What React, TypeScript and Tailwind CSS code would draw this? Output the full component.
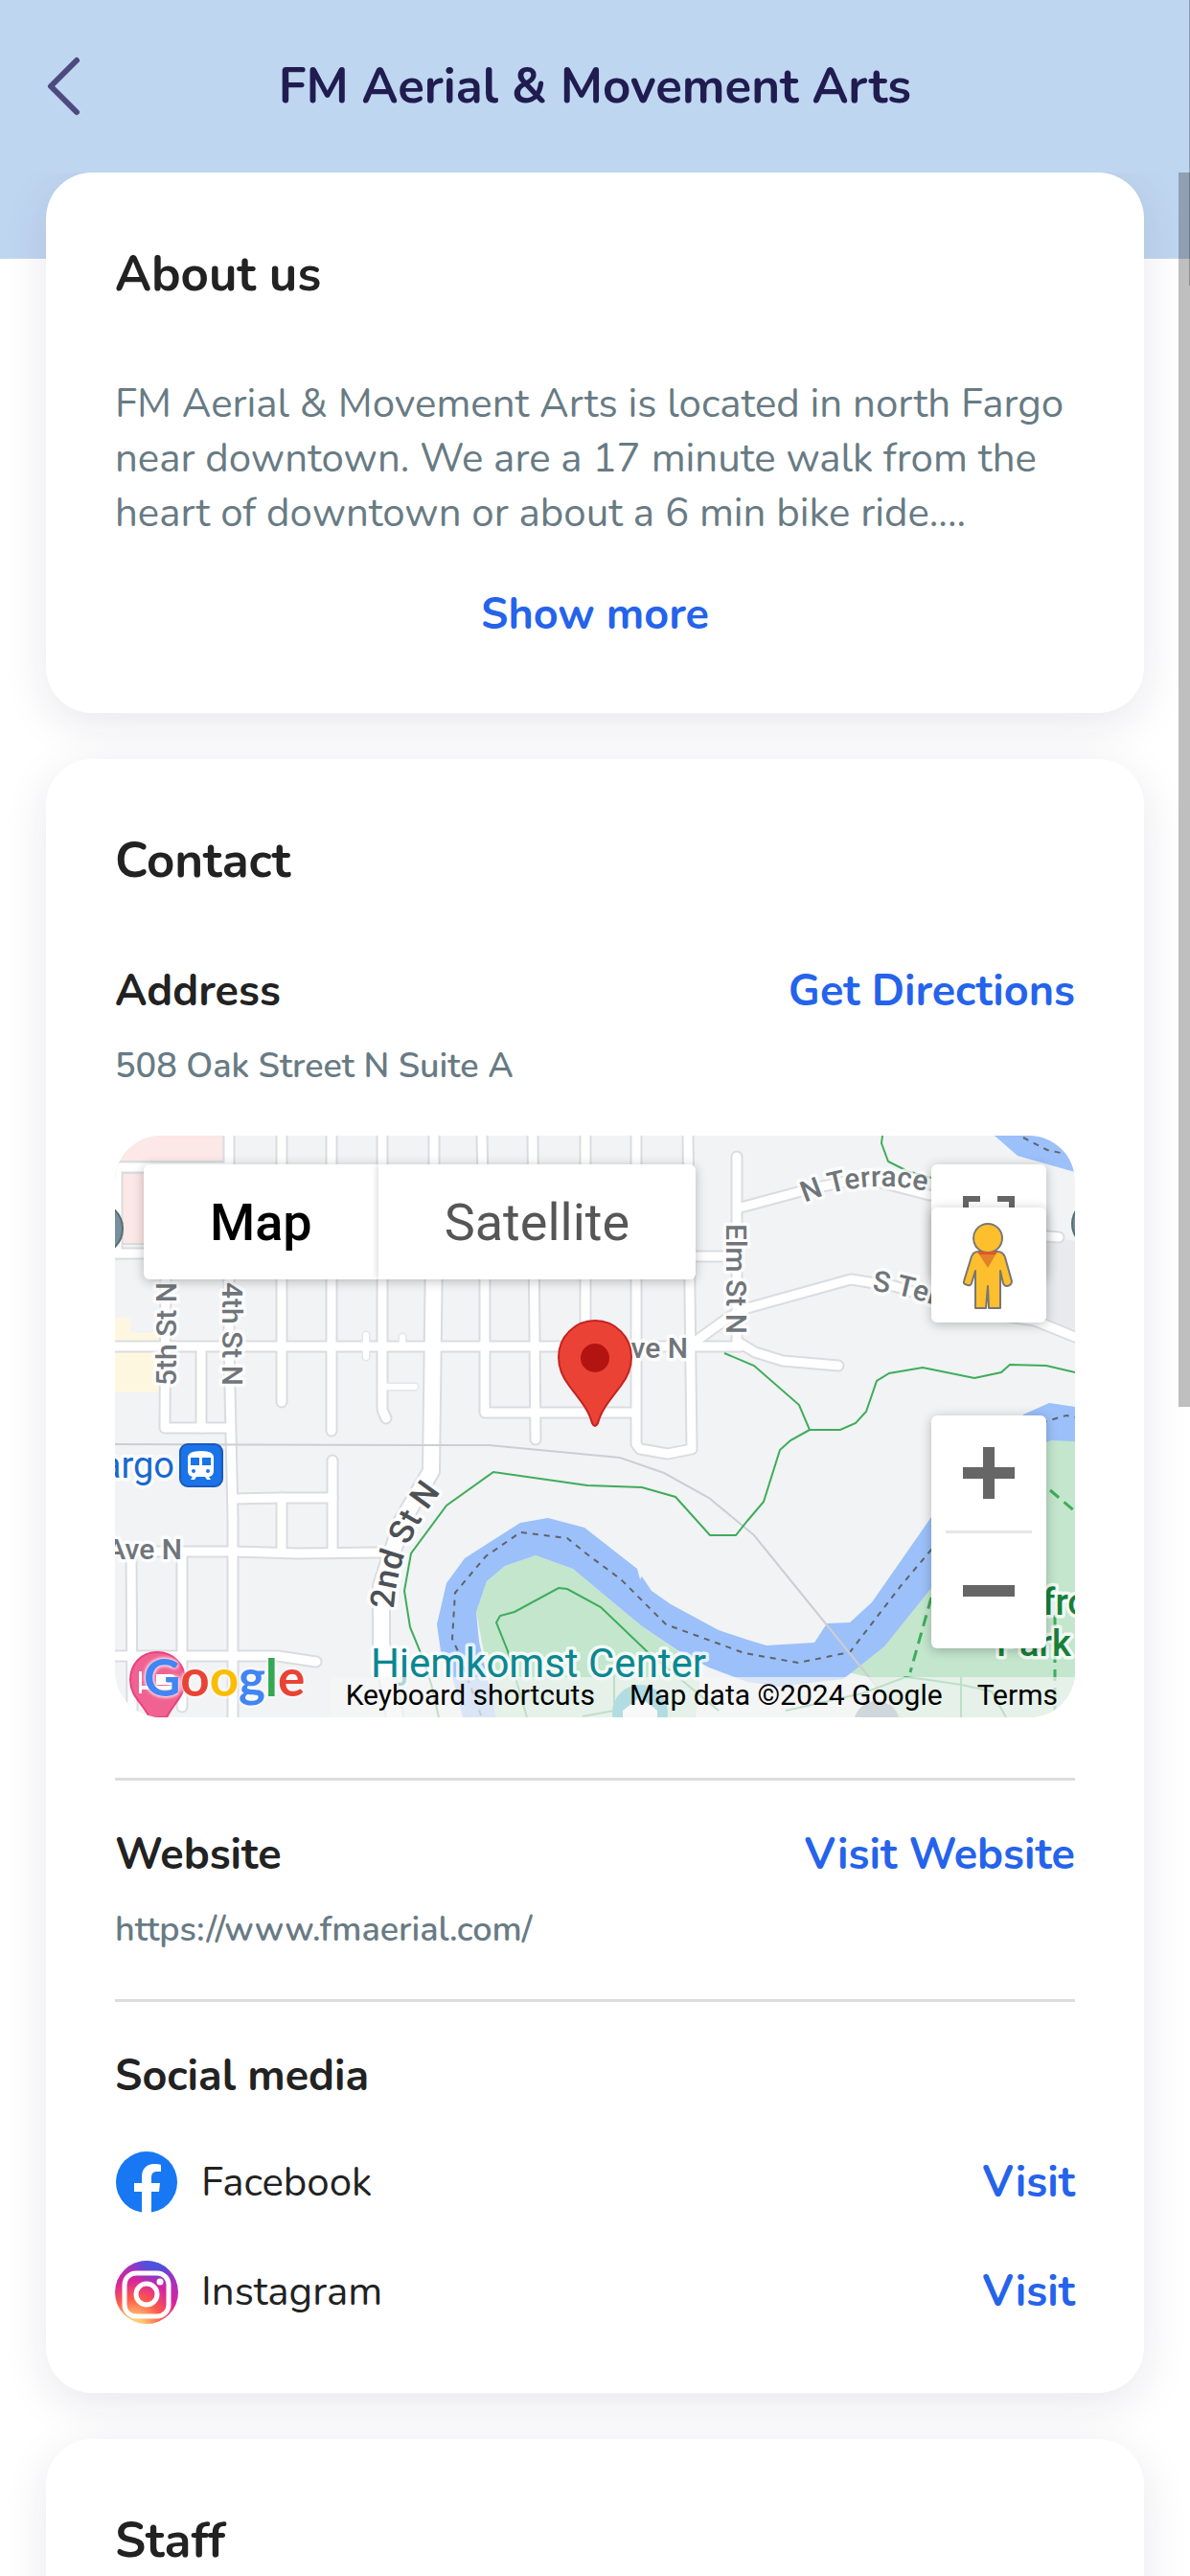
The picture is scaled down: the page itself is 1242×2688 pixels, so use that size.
import { useState } from 'react';
import type { ReactNode } from 'react';

const streets = [
  'M119 0V220L123 400V607',
  'M53 130L52 305H119',
  'M90 225V305',
  'M0 33H120',
  'M0 123H120',
  'M2 33V123',
  'M0 220H653',
  'M174 0V278',
  'M226 0V308',
  'M279 0V286L283 295',
  'M333 0V150',
  'M383 0L386 140V289H540',
  'M436 0L439 317',
  'M491 0V220',
  'M544 0V322L548 327L577 332L602 327L598 0',
  'M600 126H650',
  'M649 22V215',
  'M653 75L720 57L780 44L850 62',
  'M604 216L640 190L660 180L768 150L813 157L900 184L960 193L1002 210',
  'M930 102L985 106',
  'M650 215L668 226L697 235L755 240',
  'M123 379L174 378H227',
  'M227 339V435',
  'M174 378V435',
  'M0 434H123L190 436L277 435',
  'M17 434L18 607',
  'M70 434V596',
  'M0 543H170L210 549',
];

const lanes = ['M279 262H313', 'M262 208V231', 'M300 210V220'];

const avenue = 'M333 120L330 350L300 402L278 470V530L292 607';

const trails = [
  'M801 0L800 8L807 27L827 37L852 44',
  'M636 227L667 240L714 281L725 307L757 307L773 300L784 288L795 256L808 248L843 242L897 253L925 247L934 239L972 240L1002 247',
  'M725 307L705 318L694 328L677 382L660 402L648 417H621L585 377L550 367L493 365L395 351L346 386L309 436L302 475L308 513L320 542L330 572L338 607',
  'M430 607L410 538L398 508L402 501L417 497L463 472L472 473L507 492L555 538L630 600',
  'M521 565V600L488 606',
  'M700 600L780 582L825 565L850 568L883 573L915 580L930 607',
  'M883 565V607',
];

const socials = [
  { name: 'Facebook', icon: <FacebookIcon />, href: '#facebook' },
  { name: 'Instagram', icon: <InstagramIcon />, href: '#instagram' },
];

function FacebookIcon() {
  return (
    <svg viewBox="0 0 66 66" className="size-[66px]" aria-hidden>
      <circle cx="33" cy="32" r="32" fill="#1877f2" />
      <path
        d="M28 65V42H20V33H28V27C28 18 33 13 41 13C44 13 46 13 48 14V21H44C40 21 38 23 38 27V33H47L46 42H38V65Z"
        fill="#fff"
      />
    </svg>
  );
}

function InstagramIcon() {
  return (
    <svg viewBox="0 0 66 66" className="size-[66px]" aria-hidden>
      <defs>
        <radialGradient id="ig-warm" cx="0.3" cy="1.05" r="1">
          <stop offset="0" stopColor="#ffdd80" />
          <stop offset="0.15" stopColor="#ffc773" />
          <stop offset="0.45" stopColor="#ff5a48" />
          <stop offset="0.75" stopColor="#d6249f" />
          <stop offset="1" stopColor="#a033c0" />
        </radialGradient>
        <radialGradient id="ig-cool" cx="0.65" cy="-0.1" r="0.5">
          <stop offset="0" stopColor="#2f62ea" />
          <stop offset="0.5" stopColor="#4f50dc" stopOpacity="0.9" />
          <stop offset="1" stopColor="#7a3ad0" stopOpacity="0" />
        </radialGradient>
      </defs>
      <circle cx="33" cy="33" r="33" fill="url(#ig-warm)" />
      <circle cx="33" cy="33" r="33" fill="url(#ig-cool)" />
      <rect x="10" y="13" width="46" height="45" rx="12" fill="none" stroke="#fff" strokeWidth="5" />
      <circle cx="33" cy="35" r="11" fill="none" stroke="#fff" strokeWidth="5" />
      <circle cx="47" cy="22" r="3.5" fill="#fff" />
    </svg>
  );
}

function MapCanvas() {
  return (
    <svg
      viewBox="0 0 1002 607"
      preserveAspectRatio="xMidYMid slice"
      className="block h-full w-full"
      fontFamily="Roboto, sans-serif"
      aria-hidden
    >
      <defs>
        <path id="n-terrace" d="M720 70Q784 42 856 60" />
        <path id="s-terrace" d="M790 162Q830 166 874 184" />
        <path id="second-st" d="M291 494Q294 424 350 360" />
      </defs>
      <rect width="1002" height="607" fill="#f1f3f4" />

      <g fill="#fce8e6" stroke="#dadce0" strokeWidth="2">
        <path d="M-4 -4H114V27H-4Z" />
        <path d="M6 39H60V113H6Z" />
      </g>
      <path d="M0 190H16V206H46V268H0Z" fill="#fef7e0" />
      <path d="M972 105L1002 110V202L972 192Z" fill="#e8eaed" />

      <g fill="none" strokeLinejoin="round" strokeLinecap="round">
        {streets.map((d) => <path key={d} d={d} stroke="#dadce0" strokeWidth="13" />)}
        {lanes.map((d) => <path key={d} d={d} stroke="#e4e6e9" strokeWidth="9" />)}
        <path d={avenue} stroke="#dadce0" strokeWidth="20" />
        {streets.map((d) => <path key={d} d={d} stroke="#fff" strokeWidth="9" />)}
        {lanes.map((d) => <path key={d} d={d} stroke="#fff" strokeWidth="6" />)}
        <path d={avenue} stroke="#fff" strokeWidth="16" />
      </g>

      {/* parks and river */}
      <path
        d="M398 607L377 497L388 465L407 449L439 438L478 452L550 512L612 555L606 607Z"
        fill="#c3e6cd"
      />
      <path d="M765 560L852 440L972 310H1002V607H820L787 565Z" fill="#c3e6cd" />
      <path
        d="M363 607L353 568L340 538L336 510L346 467L365 441L423 404L452 399L490 409L545 452L548 463L550 460L560 475L580 489L630 516L660 526L680 532L730 529L743 509L767 508L790 487L852 398L948 291L975 279L1002 283V319L977 318L972 320L852 472L803 533L778 553L760 567L693 575L660 570L620 555L587 537L550 512L478 452L439 438L407 449L388 465L377 497L380 528L398 607Z"
        fill="#9cc0f9"
      />
      <path d="M918 0L942 21L1002 38V0Z" fill="#9cc0f9" />

      <g fill="none" stroke="#5f6368" strokeWidth="2" strokeDasharray="6 6">
        <path d="M382 605L358 538L352 525L355 477L387 439L423 414L472 420L493 437L528 463L575 510L657 540L713 550L767 539L820 470L852 432L972 298L993 292L1002 294" />
        <path d="M948 2L973 15L987 18" />
      </g>
      <path
        d="M0 322L320 323L390 323L527 336L573 352L620 378L667 417L787 565L820 607"
        fill="none"
        stroke="#ccced1"
        strokeWidth="2"
      />
      <g fill="none" stroke="#3fac5b" strokeWidth="2">
        {trails.map((d) => <path key={d} d={d} />)}
        <path d="M852 482L830 560" strokeWidth="3" strokeDasharray="12 7" />
        <path d="M976 370L1002 392" strokeWidth="3" strokeDasharray="12 7" />
        <path d="M981 500V607" strokeWidth="3" strokeDasharray="12 7" />
      </g>

      <circle cx="-19" cy="97" r="27" fill="#78909c" stroke="#546e7a" strokeWidth="2" />
      <circle cx="1024" cy="92" r="25" fill="#78909c" stroke="#546e7a" strokeWidth="2" />
      <circle cx="548" cy="602" r="29" fill="#12a4b5" />
      <path d="M548 586L530 600V607H566V600Z" fill="#fff" />
      <circle cx="795" cy="614" r="24" fill="#78909c" />

      {/* labels */}
      <g
        fontSize="30"
        fontWeight="500"
        fill="#70757a"
        stroke="#fff"
        strokeOpacity="0.8"
        strokeWidth="7"
        strokeLinejoin="round"
        paintOrder="stroke"
      >
        <text transform="translate(64 261) rotate(-90)">5th St N</text>
        <text transform="translate(112 261) rotate(90)" textAnchor="end">4th St N</text>
        <text transform="translate(638 92) rotate(90)">Elm St N</text>
        <text x="598" y="232" textAnchor="end">Ave N</text>
        <text x="70" y="442" textAnchor="end">Ave N</text>
        <text><textPath href="#n-terrace">N Terrace</textPath></text>
        <text><textPath href="#s-terrace">S Terrace</textPath></text>
        <text fontSize="35" fill="#4d5156"><textPath href="#second-st">2nd St N</textPath></text>
        <text x="62" y="357" fontSize="38" fontWeight="400" fill="#1967d2" textAnchor="end">Fargo</text>
        <text x="267" y="565" fontSize="42" fontWeight="400" fill="#0b8792">Hjemkomst Center</text>
        <text x="968" y="500" fontSize="38" fill="#188038">front</text>
        <text x="920" y="543" fontSize="38" fill="#188038">Park</text>
      </g>

      {/* station badge */}
      <rect x="68" y="322" width="44" height="44" rx="8" fill="#1a73e8" stroke="#185abc" strokeWidth="2" />
      <path d="M76 336Q76 329 90 329Q103 329 103 336V350Q103 355 98 356L100 359H96L94 356H85L83 359H79L81 356Q76 355 76 350Z" fill="#fff" />
      <path d="M79 336H88V344H79ZM91 336H100V344H91Z" fill="#1a73e8" />
      <circle cx="82" cy="350" r="2" fill="#1a73e8" />
      <circle cx="97" cy="350" r="2" fill="#1a73e8" />

      {/* lodging pin */}
      <path d="M44 539C27 539 16 552 16 568C16 585 28 591 36 607H54C62 591 73 585 73 568C73 552 61 539 44 539Z" fill="#f06292" stroke="#ec407a" strokeWidth="2" />
      <path d="M25 559H28V574H63V582H60V578H28V582H25ZM43 562H58Q63 562 63 567V573H43Z" fill="#fff" />

      {/* studio marker */}
      <path
        d="M501 193C480 193 463 210 463 231C463 243 467 252 474 261C483 273 494 285 498 300Q501 306 504 300C508 285 519 273 528 261C535 252 539 243 539 231C539 210 522 193 501 193Z"
        fill="#ea4335"
        stroke="#c5221f"
        strokeWidth="2"
      />
      <circle cx="501" cy="232" r="15" fill="#b31412" />
    </svg>
  );
}

function Pegman() {
  return (
    <svg viewBox="0 0 120 120" className="size-[120px]" aria-hidden>
      <g fill="#fdbf2d" stroke="#777" strokeWidth="2" strokeLinejoin="round">
        <path d="M49 46H69Q75 46 77 52L84 77Q84 81 79 82Q76 82 75 79L72 66V105H60L59 82L57 105H46V66L42 79Q41 82 38 81Q33 80 34 77L42 51Q44 46 49 46Z" />
        <circle cx="59" cy="32" r="15" />
      </g>
      <path d="M48 46H69L59 63Z" fill="#e1812c" />
      <path d="M48 46H69L67 49H50Z" fill="#db5a2a" />
    </svg>
  );
}

function LocationMap() {
  const [view, setView] = useState('Map');

  return (
    <div className="relative mt-12 h-[607px] overflow-hidden rounded-[48px] font-[Roboto,sans-serif]">
      <MapCanvas />

      <div className="absolute left-[30px] top-[30px] flex h-[120px] overflow-hidden rounded-md bg-white text-[54px] shadow-[0_2px_12px_rgba(0,0,0,0.25)]">
        {['Map', 'Satellite'].map((name) => (
          <button
            key={name}
            type="button"
            onClick={() => setView(name)}
            className={
              view === name
                ? 'px-[69px] font-medium text-black'
                : 'px-[69px] text-[#565656] shadow-[0_0_8px_rgba(0,0,0,0.2)]'
            }
          >
            {name}
          </button>
        ))}
      </div>

      <button
        type="button"
        aria-label="Toggle fullscreen"
        className="absolute right-[30px] top-[30px] size-[120px] rounded-md bg-white shadow-[0_2px_12px_rgba(0,0,0,0.25)]"
      >
        <svg viewBox="0 0 120 120" className="size-full" aria-hidden>
          <path d="M36 51V36H51M69 36H84V51M84 69V84H69M51 84H36V69" fill="none" stroke="#666" strokeWidth="6" />
        </svg>
      </button>
      <button
        type="button"
        aria-label="Open Street View"
        className="absolute right-[30px] top-[75px] size-[120px] rounded-md bg-white shadow-[0_2px_12px_rgba(0,0,0,0.25)]"
      >
        <Pegman />
      </button>

      <div className="absolute right-[30px] top-[292px] flex w-[120px] flex-col items-center rounded-md bg-white shadow-[0_2px_12px_rgba(0,0,0,0.25)]">
        <button type="button" aria-label="Zoom in" className="grid size-[120px] place-items-center">
          <svg viewBox="0 0 54 54" className="size-[54px]" aria-hidden>
            <path d="M0 21H21V0H33V21H54V33H33V54H21V33H0Z" fill="#666" />
          </svg>
        </button>
        <span className="h-[3px] w-[90px] bg-[#e6e6e6]" />
        <button type="button" aria-label="Zoom out" className="grid size-[120px] place-items-center">
          <svg viewBox="0 0 54 54" className="size-[54px]" aria-hidden>
            <path d="M0 21H54V33H0Z" fill="#666" />
          </svg>
        </button>
      </div>

      <a
        href="#google-maps"
        aria-label="Google"
        className="absolute bottom-3 left-[30px] font-[Lato,sans-serif] text-[53px] font-bold leading-[60px] [text-shadow:0_0_4px_#fff,0_0_4px_#fff]"
      >
        <span className="text-[#4285f4]">G</span>
        <span className="text-[#ea4335]">o</span>
        <span className="text-[#fbbc04]">o</span>
        <span className="text-[#4285f4]">g</span>
        <span className="text-[#34a853]">l</span>
        <span className="text-[#ea4335]">e</span>
      </a>

      <div className="absolute bottom-0 right-0 flex h-[42px] items-start gap-9 bg-[#f5f5f5]/70 pl-4 pr-[18px] text-[30px] leading-[38px] text-black">
        <button type="button">Keyboard shortcuts</button>
        <span>Map data ©2024 Google</span>
        <a href="#terms">Terms</a>
      </div>
    </div>
  );
}

function Card({ title, children }: { title: string; children?: ReactNode }) {
  return (
    <section className="rounded-[48px] bg-white p-[72px] shadow-[0_12px_48px_rgba(30,30,80,0.1)]">
      <h2 className="text-[51px] font-bold leading-[69px]">{title}</h2>
      {children}
    </section>
  );
}

function InfoRow({ label, value, action, href }: { label: string; value: string; action: string; href: string }) {
  return (
    <>
      <div className="flex items-center justify-between text-[45px] font-bold leading-[60px]">
        <h3>{label}</h3>
        <a href={href} className="text-[#2563eb]">{action}</a>
      </div>
      <p className="mt-6 text-[36px] font-semibold leading-[48px] text-[#687b84]">{value}</p>
    </>
  );
}

export default function App() {
  return (
    <div className="relative flex h-screen flex-col overflow-hidden bg-white font-[Nunito,Lato,sans-serif] text-[#222]">
      <header className="grid h-[180px] shrink-0 grid-cols-[96px_1fr_96px] items-center bg-[#bfd6f0] text-[#201c50]">
        <button type="button" aria-label="Back" className="flex justify-end">
          <svg viewBox="0 0 48 66" className="h-[66px] w-12" aria-hidden>
            <path d="M32 6L5 33L32 60" fill="none" stroke="#4c4a7e" strokeWidth="6" strokeLinecap="round" strokeLinejoin="round" />
          </svg>
        </button>
        <h1 className="text-center text-[51px] font-bold leading-[69px]">FM Aerial &amp; Movement Arts</h1>
      </header>

      <main className="relative flex-1 overflow-hidden">
        <div className="absolute inset-x-0 top-0 h-[90px] bg-[#bfd6f0]" aria-hidden />
        <div className="relative flex flex-col gap-12 px-12">
          <Card title="About us">
            <p className="mt-[72px] text-[42px] leading-[57px] text-[#687b84]">
              FM Aerial &amp; Movement Arts is located in north Fargo near downtown. We are a 17 minute walk from the
              heart of downtown or about a 6 min bike ride....
            </p>
            <div className="flex justify-center pt-12">
              <button type="button" className="text-[45px] font-bold leading-[60px] text-[#2563eb]">
                Show more
              </button>
            </div>
          </Card>

          <Card title="Contact">
            <div className="mt-[72px]">
              <InfoRow label="Address" value="508 Oak Street N Suite A" action="Get Directions" href="#directions" />
            </div>
            <LocationMap />
            <hr className="mb-12 mt-[63px] border-t-[3px] border-[#dcdcdc]" />
            <InfoRow label="Website" value="https://www.fmaerial.com/" action="Visit Website" href="#website" />
            <hr className="my-12 border-t-[3px] border-[#dcdcdc]" />
            <h3 className="text-[45px] font-bold leading-[60px]">Social media</h3>
            <ul className="flex flex-col gap-12 pt-12">
              {socials.map((item) => (
                <li key={item.name} className="flex items-center gap-6">
                  {item.icon}
                  <span className="flex-1 text-[42px] leading-[60px]">{item.name}</span>
                  <a
                    href={item.href}
                    aria-label={`Visit ${item.name}`}
                    className="text-[45px] font-bold leading-[60px] text-[#2563eb]"
                  >
                    Visit
                  </a>
                </li>
              ))}
            </ul>
          </Card>

          <Card title="Staff" />
        </div>
        <div className="absolute right-0 top-0 h-[1288px] w-3 bg-black/25" aria-hidden />
      </main>
      <div className="absolute right-0 top-0 h-[298px] w-px bg-black/25" aria-hidden />
    </div>
  );
}
